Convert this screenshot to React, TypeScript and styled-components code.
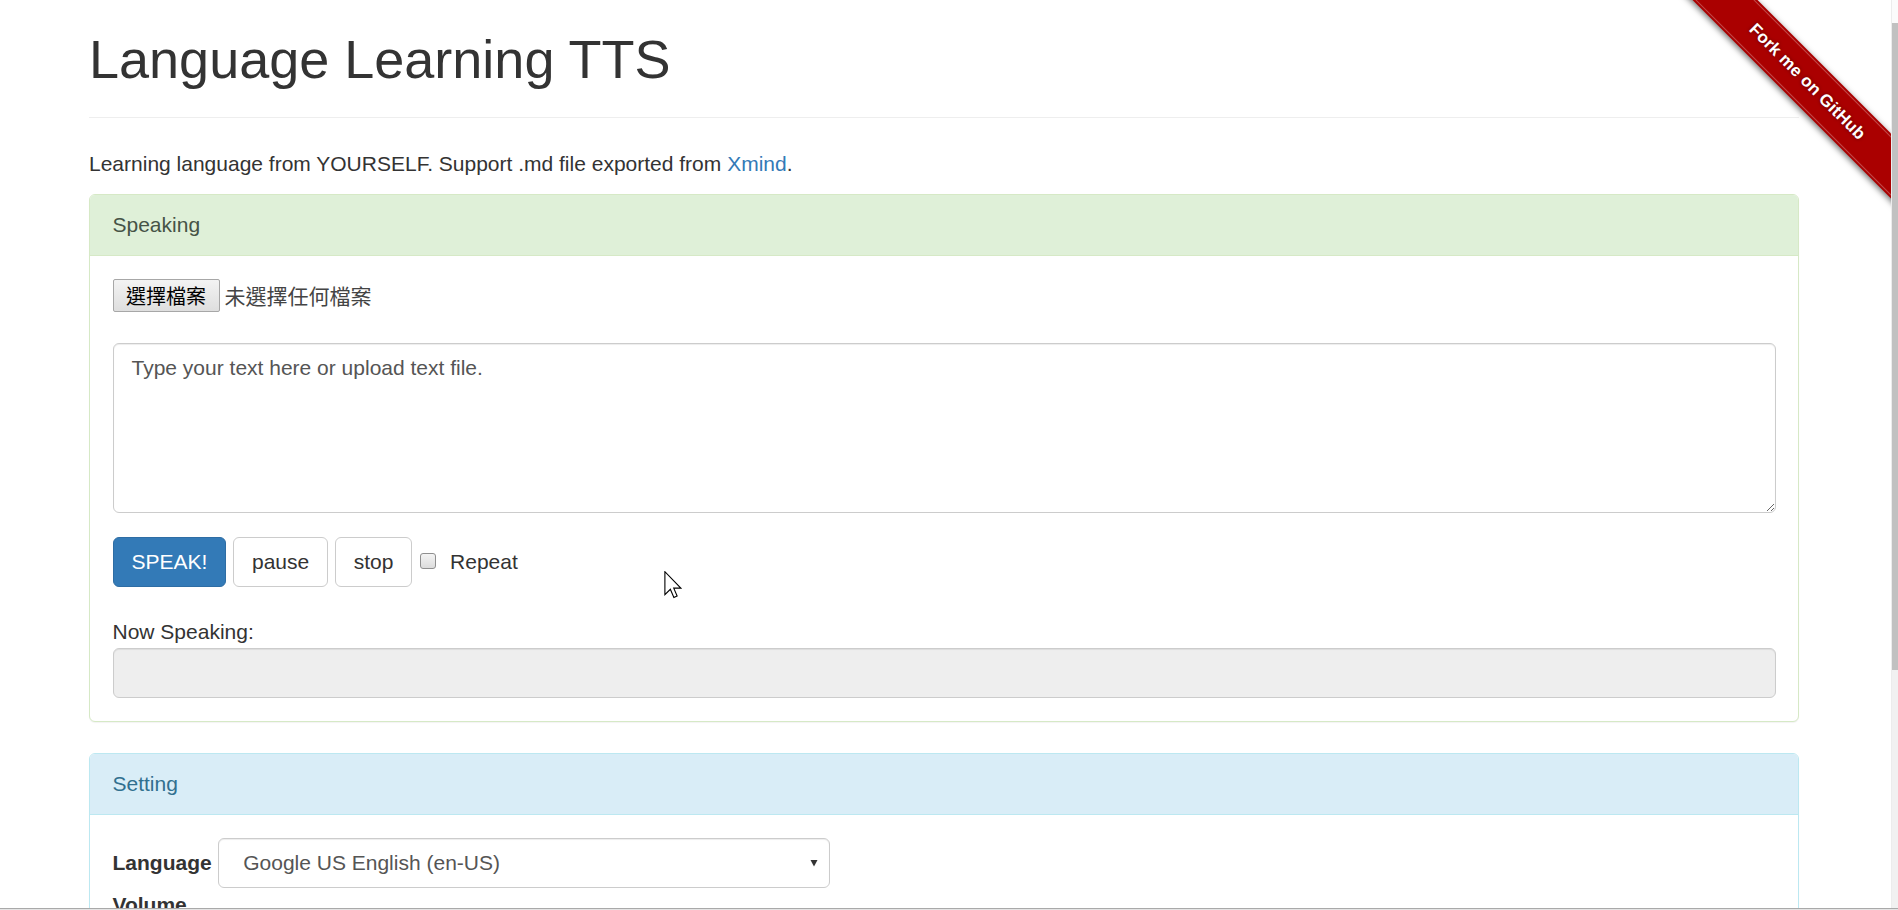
import React from "react";
import styled, { createGlobalStyle, css } from "styled-components";

const GlobalStyle = createGlobalStyle`
  html, body {
    margin: 0;
    padding: 0;
    background: #fff;
    overflow: hidden;
  }
  body {
    font-family: "Liberation Sans", Arial, Helvetica, sans-serif;
    font-size: 21px;
    line-height: 30px;
    color: #333;
  }
  * { box-sizing: border-box; }
`;

const Screen = styled.div`
  width: 1898px;
  height: 910px;
  display: flex;
  flex-direction: column;
  overflow: hidden;
`;

const Viewport = styled.div`
  height: 908px;
  display: flex;
  flex-direction: row;
`;

const Page = styled.div`
  position: relative;
  flex: 1;
  overflow: hidden;
  background: #fff;
`;

const Scrollbar = styled.div`
  width: 7px;
  display: flex;
  flex-direction: column;
  background: #f1f1f1;
  border-left: 1px solid #ececec;
`;

const ScrollTop = styled.div`
  height: 23px;
  background: #fbfbfb;
`;

const ScrollThumb = styled.div`
  height: 647px;
  background: #c1c1c1;
`;

const BottomEdge = styled.div`
  height: 2px;
  background: #e4e4e4;
  border-top: 1px solid #a9a9a9;
`;

const Container = styled.div`
  width: 1710px;
  margin-left: 89px;
`;

const PageHeader = styled.header`
  padding-top: 30px;
  padding-bottom: 13px;
  border-bottom: 1px solid #eee;
  margin-bottom: 31px;
`;

const Title = styled.h1`
  margin: 0 0 15px 0;
  font-size: 54px;
  line-height: 59px;
  font-weight: 500;
  color: #333;
`;

const Lead = styled.p`
  margin: 0 0 15px 0;
  font-size: 21px;
  line-height: 30px;
`;

const Link = styled.a`
  color: #337ab7;
  text-decoration: none;
`;

type Variant = "success" | "info";

const panelColors: Record<Variant, { border: string; bg: string; text: string }> = {
  success: { border: "#d6e9c6", bg: "#dff0d8", text: "#465346" },
  info: { border: "#bce8f1", bg: "#d9edf7", text: "#31708f" },
};

const Panel = styled.section<{ $variant: Variant; $gap?: number }>`
  border: 1px solid ${(p) => panelColors[p.$variant].border};
  border-radius: 6px;
  margin-bottom: ${(p) => p.$gap ?? 31}px;
  background: #fff;
  box-shadow: 0 1px 1px rgba(0, 0, 0, 0.05);
`;

const PanelHeading = styled.div<{ $variant: Variant }>`
  height: 61px;
  padding: 15px 22.5px;
  line-height: 30px;
  font-size: 21px;
  background: ${(p) => panelColors[p.$variant].bg};
  color: ${(p) => panelColors[p.$variant].text};
  border-bottom: 1px solid ${(p) => panelColors[p.$variant].border};
  border-top-left-radius: 5px;
  border-top-right-radius: 5px;
`;

const PanelBody = styled.div`
  padding: 23px 22.5px;
  display: flex;
  flex-direction: column;
`;

const FileRow = styled.div`
  height: 33px;
  display: flex;
  align-items: center;
  gap: 5px;
  margin-bottom: 31px;
`;

const cjk = `"Noto Sans CJK TC", "Noto Sans CJK SC", "Liberation Sans", sans-serif`;

const FileButton = styled.button`
  height: 33px;
  padding: 0 12.5px;
  font-family: ${cjk};
  font-size: 20px;
  line-height: 1;
  color: #000;
  border: 1px solid #a7a7a7;
  border-radius: 2px;
  background: linear-gradient(#f3f3f3, #dedede);
`;

const FileName = styled.span`
  font-family: ${cjk};
  font-size: 21px;
  line-height: 1;
  color: #444;
`;

const fieldBase = css`
  width: 100%;
  border: 1px solid #ccc;
  border-radius: 6px;
  box-shadow: inset 0 1px 1px rgba(0, 0, 0, 0.075);
  font-family: "Liberation Sans", Arial, sans-serif;
  font-size: 21px;
  line-height: 30px;
  color: #555;
`;

const TextArea = styled.textarea`
  ${fieldBase};
  height: 170px;
  padding: 9px 18px;
  resize: vertical;
  display: block;
  margin: 0 0 24px 0;
  &::placeholder {
    color: #555;
  }
`;

const ButtonRow = styled.div`
  height: 50px;
  display: flex;
  align-items: center;
  margin-bottom: 30px;
`;

const Btn = styled.button<{ $primary?: boolean }>`
  height: 50px;
  padding: 9px 18px;
  margin-right: 6.6px;
  font-family: "Liberation Sans", Arial, sans-serif;
  font-size: 21px;
  line-height: 30px;
  border-radius: 6px;
  border: 1px solid ${(p) => (p.$primary ? "#2e6da4" : "#ccc")};
  background: ${(p) => (p.$primary ? "#337ab7" : "#fff")};
  color: ${(p) => (p.$primary ? "#fff" : "#333")};
`;

const CheckLabel = styled.label`
  display: flex;
  align-items: center;
  margin-left: 1px;
  font-size: 21px;
  line-height: 30px;
`;

const CheckBox = styled.span`
  width: 16px;
  height: 16px;
  margin-right: 14px;
  margin-top: -2px;
  border: 1px solid #8f8f8f;
  border-radius: 3px;
  background: linear-gradient(#f4f4f4, #dcdcdc);
`;

const FieldLabel = styled.div`
  font-size: 21px;
  line-height: 30px;
  margin-bottom: 1px;
`;

const ReadonlyInput = styled.div`
  ${fieldBase};
  height: 50px;
  background: #eee;
`;

const InlineField = styled.div`
  display: flex;
  align-items: center;
  height: 50px;
  margin-bottom: 2px;
`;

const BoldLabel = styled.div`
  font-weight: 700;
  font-size: 21px;
  line-height: 30px;
  margin-right: 6.5px;
`;

const SelectWrap = styled.div`
  position: relative;
  width: 612px;
  height: 50px;
`;

const Select = styled.select`
  ${fieldBase};
  height: 50px;
  padding: 0 40px 0 24px;
  appearance: none;
  -webkit-appearance: none;
  background: #fff;
  color: #555;
`;

const SelectArrow = styled.svg`
  position: absolute;
  right: 12px;
  top: 21px;
  pointer-events: none;
`;

const Ribbon = styled.div`
  position: absolute;
  top: 0;
  right: 0;
  width: 224px;
  height: 224px;
  overflow: hidden;
  pointer-events: none;
`;

const RibbonBand = styled.a`
  position: absolute;
  left: -30px;
  top: 59px;
  width: 340px;
  height: 46px;
  transform: rotate(45deg);
  background: #a00;
  box-shadow: 0 2px 6px rgba(0, 0, 0, 0.55);
  display: flex;
  align-items: center;
  justify-content: center;
  color: #fff;
  text-decoration: none;
  font-family: "Liberation Sans", Arial, sans-serif;
  font-weight: 700;
  font-size: 17px;
  letter-spacing: 0.2px;
  text-shadow: 0 0 4px rgba(0, 0, 0, 0.45);
  &::before,
  &::after {
    content: "";
    position: absolute;
    left: 0;
    right: 0;
    height: 1px;
    background: rgba(255, 255, 255, 0.28);
  }
  &::before { top: 2px; }
  &::after { bottom: 2px; }
`;

const Cursor = styled.svg`
  position: absolute;
  left: 664px;
  top: 571px;
  pointer-events: none;
`;

export default function App() {
  return (
    <>
      <GlobalStyle />
      <Screen>
        <Viewport>
          <Page>
            <Container>
              <PageHeader>
                <Title>Language Learning TTS</Title>
              </PageHeader>
              <Lead>
                Learning language from YOURSELF. Support .md file exported from{" "}
                <Link href="#">Xmind</Link>.
              </Lead>

              <Panel $variant="success">
                <PanelHeading $variant="success">Speaking</PanelHeading>
                <PanelBody>
                  <FileRow>
                    <FileButton type="button">選擇檔案</FileButton>
                    <FileName>未選擇任何檔案</FileName>
                  </FileRow>
                  <TextArea placeholder="Type your text here or upload text file." />
                  <ButtonRow>
                    <Btn $primary type="button">SPEAK!</Btn>
                    <Btn type="button">pause</Btn>
                    <Btn type="button">stop</Btn>
                    <CheckLabel>
                      <CheckBox />
                      Repeat
                    </CheckLabel>
                  </ButtonRow>
                  <FieldLabel>Now Speaking:</FieldLabel>
                  <ReadonlyInput />
                </PanelBody>
              </Panel>

              <Panel $variant="info">
                <PanelHeading $variant="info">Setting</PanelHeading>
                <PanelBody>
                  <InlineField>
                    <BoldLabel>Language</BoldLabel>
                    <SelectWrap>
                      <Select defaultValue="en-US">
                        <option value="en-US">Google US English (en-US)</option>
                      </Select>
                      <SelectArrow width="8" height="8" viewBox="0 0 8 8">
                        <path d="M0.5 1 L7.5 1 L4 7.5 Z" fill="#333" />
                      </SelectArrow>
                    </SelectWrap>
                  </InlineField>
                  <BoldLabel>Volume</BoldLabel>
                </PanelBody>
              </Panel>
            </Container>

            <Ribbon>
              <RibbonBand href="#">Fork me on GitHub</RibbonBand>
            </Ribbon>

            <Cursor width="18" height="28" viewBox="0 0 12 19">
              <path
                d="M0.5 0.5 L0.5 16 L4.2 12.4 L6.6 18 L8.8 17 L6.5 11.6 L11.3 11.6 Z"
                fill="#fff"
                stroke="#000"
                strokeWidth="0.75"
                strokeLinejoin="miter"
              />
            </Cursor>
          </Page>
          <Scrollbar>
            <ScrollTop />
            <ScrollThumb />
          </Scrollbar>
        </Viewport>
        <BottomEdge />
      </Screen>
    </>
  );
}
